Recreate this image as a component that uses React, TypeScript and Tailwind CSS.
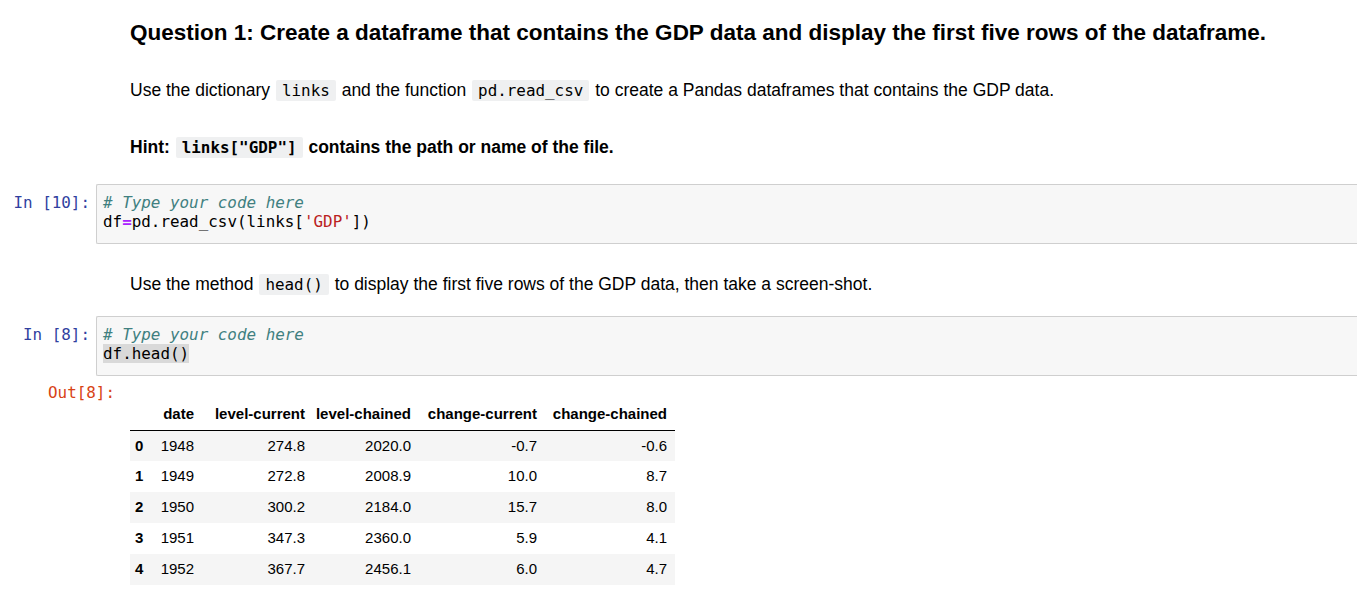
import React from "react";

const rows = [
  ["0", "1948", "274.8", "2020.0", "-0.7", "-0.6"],
  ["1", "1949", "272.8", "2008.9", "10.0", "8.7"],
  ["2", "1950", "300.2", "2184.0", "15.7", "8.0"],
  ["3", "1951", "347.3", "2360.0", "5.9", "4.1"],
  ["4", "1952", "367.7", "2456.1", "6.0", "4.7"],
];

function InlineCode({ children, bold }: { children: React.ReactNode; bold?: boolean }) {
  return (
    <code
      className={
        bold
          ? "font-['DejaVu_Sans_Mono',monospace] text-[15.9px] font-bold bg-[#eff0f1] px-[6px] py-[1px] rounded-[2px] mx-[1px]"
          : "font-['DejaVu_Sans_Mono',monospace] text-[15.9px] bg-[#eff0f1] px-[6px] py-[1px] rounded-[2px] mx-[1px]"
      }
    >
      {children}
    </code>
  );
}

export default function App() {
  return (
    <div className="w-[1357px] h-[615px] overflow-hidden bg-white text-black font-['Liberation_Sans',Arial,sans-serif]">
      <div className="flex flex-col">
        {/* Heading */}
        <div className="mt-[21px] h-[24px] leading-[24px] pl-[130px] text-[22.5px] font-bold whitespace-nowrap">
          Question 1: Create a dataframe that contains the GDP data and display the first five rows of the dataframe.
        </div>

        {/* Paragraph 1 */}
        <div className="mt-[33px] h-[24px] leading-[24px] pl-[130px] text-[17.5px] whitespace-nowrap">
          Use the dictionary <InlineCode>links</InlineCode> and the function <InlineCode>pd.read_csv</InlineCode> to create a Pandas dataframes that contains the GDP data.
        </div>

        {/* Hint */}
        <div className="mt-[33px] h-[24px] leading-[24px] pl-[130px] text-[17.5px] font-bold whitespace-nowrap">
          Hint: <InlineCode bold>links["GDP"]</InlineCode> contains the path or name of the file.
        </div>

        {/* Code cell 1 */}
        <div className="mt-[25px] flex">
          <div className="w-[96px] shrink-0 text-right pr-[6px] pt-[9px] leading-[19px] text-[15.9px] font-['DejaVu_Sans_Mono',monospace] text-[#303f9f] whitespace-nowrap">
            In [10]:
          </div>
          <div className="flex-1 h-[60px] border border-r-0 border-[#cfcfcf] bg-[#f7f7f7] rounded-l-[2px] pl-[6px] pt-[8px] leading-[19px] text-[15.9px] font-['DejaVu_Sans_Mono',monospace] whitespace-pre">
            <div className="italic text-[#408080]"># Type your code here</div>
            <div>
              df<span className="font-bold text-[#aa22ff]">=</span>pd.read_csv(links[<span className="text-[#ba2121]">'GDP'</span>])
            </div>
          </div>
        </div>

        {/* Paragraph 2 */}
        <div className="mt-[28px] h-[24px] leading-[24px] pl-[130px] text-[17.5px] whitespace-nowrap">
          Use the method <InlineCode>head()</InlineCode> to display the first five rows of the GDP data, then take a screen-shot.
        </div>

        {/* Code cell 2 */}
        <div className="mt-[20px] flex">
          <div className="w-[96px] shrink-0 text-right pr-[6px] pt-[9px] leading-[19px] text-[15.9px] font-['DejaVu_Sans_Mono',monospace] text-[#303f9f] whitespace-nowrap">
            In [8]:
          </div>
          <div className="flex-1 h-[60px] border border-r-0 border-[#cfcfcf] bg-[#f7f7f7] rounded-l-[2px] pl-[6px] pt-[8px] leading-[19px] text-[15.9px] font-['DejaVu_Sans_Mono',monospace] whitespace-pre">
            <div className="italic text-[#408080]"># Type your code here</div>
            <div>
              <span className="bg-[#d9d9d9]">df.head()</span>
            </div>
          </div>
        </div>

        {/* Output */}
        <div className="mt-[7px] flex">
          <div className="w-[130px] shrink-0 pl-[48px] leading-[19px] text-[15.9px] font-['DejaVu_Sans_Mono',monospace] text-[#d84315] whitespace-nowrap">
            Out[8]:
          </div>
          <div className="mt-[16px]">
            <table className="w-[545px] table-fixed border-collapse text-[15px] text-black">
              <colgroup>
                <col className="w-[22px]" />
                <col className="w-[50px]" />
                <col className="w-[111px]" />
                <col className="w-[106px]" />
                <col className="w-[126px]" />
                <col className="w-[130px]" />
              </colgroup>
              <thead>
                <tr className="h-[31px] border-b border-black">
                  <th className="p-0"></th>
                  <th className="p-0 pr-[8px] text-right font-bold whitespace-nowrap">date</th>
                  <th className="p-0 pr-[8px] text-right font-bold whitespace-nowrap">level-current</th>
                  <th className="p-0 pr-[8px] text-right font-bold whitespace-nowrap">level-chained</th>
                  <th className="p-0 pr-[8px] text-right font-bold whitespace-nowrap">change-current</th>
                  <th className="p-0 pr-[8px] text-right font-bold whitespace-nowrap">change-chained</th>
                </tr>
              </thead>
              <tbody>
                {rows.map((r, i) => (
                  <tr key={i} className={i % 2 === 0 ? "h-[31px] bg-[#f5f5f5]" : "h-[31px] bg-white"}>
                    <th className="p-0 pl-[5px] text-left font-bold">{r[0]}</th>
                    <td className="p-0 pr-[8px] text-right">{r[1]}</td>
                    <td className="p-0 pr-[8px] text-right">{r[2]}</td>
                    <td className="p-0 pr-[8px] text-right">{r[3]}</td>
                    <td className="p-0 pr-[8px] text-right">{r[4]}</td>
                    <td className="p-0 pr-[8px] text-right">{r[5]}</td>
                  </tr>
                ))}
              </tbody>
            </table>
          </div>
        </div>
      </div>
    </div>
  );
}
